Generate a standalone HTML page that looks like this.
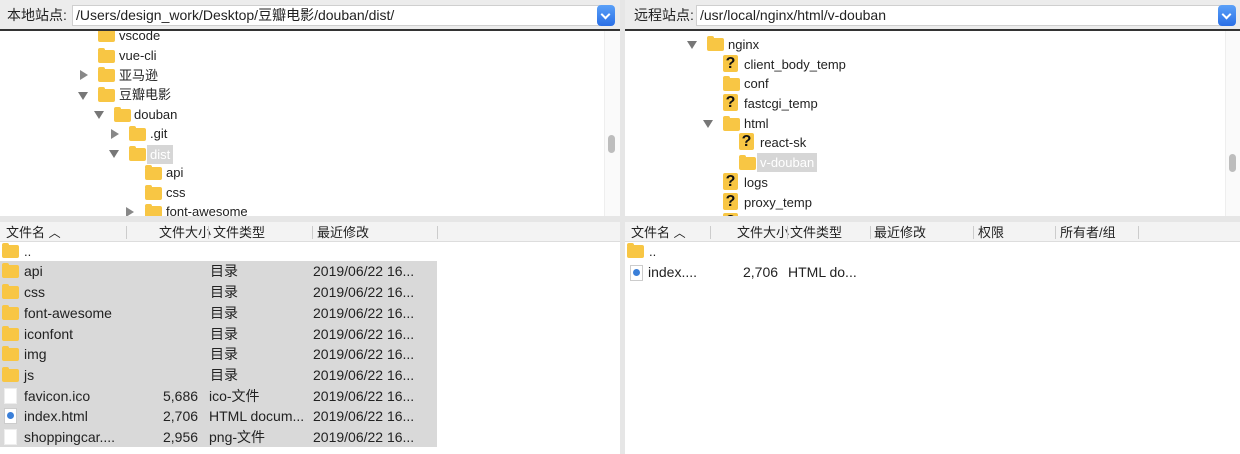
<!DOCTYPE html>
<html><head><meta charset="utf-8"><style>
*{box-sizing:border-box;margin:0;padding:0}
body{width:1240px;height:454px;background:#e6e6e6;font-family:"Liberation Sans","Noto Sans CJK SC",sans-serif;font-size:13px;color:#222;position:relative;overflow:hidden}
.abs{position:absolute;white-space:nowrap;line-height:17px}
.bar{position:absolute;top:0;height:31px;background:#ececec;border-bottom:2px solid #333}
.inp{position:absolute;top:5px;height:21px;background:#fff;border:1px solid #cfcfcf;font-size:14px;line-height:19px;padding-left:3px}
.dd{position:absolute;top:5px;width:18px;height:21px;background:linear-gradient(#5aa0f8,#2a6fe6);border-radius:4px}
.dd:after{content:"";position:absolute;left:5px;top:6px;width:5px;height:5px;border-right:2px solid #fff;border-bottom:2px solid #fff;transform:rotate(45deg)}
.tree{position:absolute;top:31px;height:185px;background:#fff;overflow:hidden}
.list{position:absolute;top:222px;height:232px;background:#fff;overflow:hidden}
.hdr{position:absolute;top:0;left:0;right:0;height:20px;background:#f3f3f3;border-bottom:1px solid #ddd}
.fd{position:absolute;width:17px;height:13px;background:#f8c644;border-radius:2px}
.fd:before{content:"";position:absolute;left:0;top:-2px;width:7px;height:3px;background:#f8c644;border-radius:2px 2px 0 0}
.q{position:absolute;width:15px;height:17px;background:#f8c644;border-radius:2px;font-weight:bold;font-size:16px;line-height:17px;text-align:center;color:#111}
.tri{position:absolute;width:0;height:0}
.dn{border-left:5px solid transparent;border-right:5px solid transparent;border-top:8px solid #777}
.rt{border-top:5px solid transparent;border-bottom:5px solid transparent;border-left:8px solid #888}
.sep{position:absolute;top:4px;width:1px;height:13px;background:#ccc}
.file{position:absolute;width:13px;height:16px;background:#fff;border:1px solid #ccc}
.html:after{content:"";position:absolute;left:2px;top:3px;width:7px;height:7px;border-radius:50%;background:#3a7fd8}
.scr{position:absolute;width:7px;height:18px;background:#bdbdbd;border-radius:4px}
.r{position:absolute;left:0;font-size:14px}
</style></head><body>
<!-- LEFT -->
<div class="bar" style="left:0;width:620px"></div>
<div class="abs" style="left:7px;top:7px;font-size:14px">本地站点:</div>
<div class="inp" style="left:72px;width:528px">/Users/design_work/Desktop/豆瓣电影/douban/dist/</div>
<div class="dd" style="left:597px"></div>
<div class="tree" style="left:0;width:620px">
 <div class="abs" style="left:604px;top:0;width:16px;height:185px;background:#fafafa;border-left:1px solid #eee"></div>
 <div class="scr" style="left:608px;top:104px"></div>
 <div class="fd" style="left:98px;top:-2px"></div><div class="abs" style="left:119px;top:-4px">vscode</div>
 <div class="fd" style="left:98px;top:19px"></div><div class="abs" style="left:119px;top:16px">vue-cli</div>
 <div class="tri rt" style="left:80px;top:39px"></div><div class="fd" style="left:98px;top:38px"></div><div class="abs" style="left:119px;top:36px">亚马逊</div>
 <div class="tri dn" style="left:78px;top:61px"></div><div class="fd" style="left:98px;top:58px"></div><div class="abs" style="left:119px;top:55px">豆瓣电影</div>
 <div class="tri dn" style="left:94px;top:80px"></div><div class="fd" style="left:114px;top:78px"></div><div class="abs" style="left:134px;top:75px">douban</div>
 <div class="tri rt" style="left:111px;top:98px"></div><div class="fd" style="left:129px;top:97px"></div><div class="abs" style="left:150px;top:94px">.git</div>
 <div class="tri dn" style="left:109px;top:119px"></div><div class="fd" style="left:129px;top:117px"></div><div class="abs" style="left:147px;top:114px;background:#d6d6d6;color:#fff;padding:0 3px;height:19px;line-height:19px">dist</div>
 <div class="fd" style="left:145px;top:136px"></div><div class="abs" style="left:166px;top:133px">api</div>
 <div class="fd" style="left:145px;top:156px"></div><div class="abs" style="left:166px;top:153px">css</div>
 <div class="tri rt" style="left:126px;top:176px"></div><div class="fd" style="left:145px;top:175px"></div><div class="abs" style="left:166px;top:172px">font-awesome</div>
</div>
<div class="list" style="left:0;width:620px">
 <div class="hdr"></div>
 <div class="abs" style="left:6px;top:2px">文件名 <span style="font-size:12px">︿</span></div>
 <div class="sep" style="left:126px"></div>
 <div class="abs" style="left:159px;top:2px">文件大小</div>
 <div class="sep" style="left:208px"></div>
 <div class="abs" style="left:213px;top:2px">文件类型</div>
 <div class="sep" style="left:312px"></div>
 <div class="abs" style="left:317px;top:2px">最近修改</div>
 <div class="sep" style="left:437px"></div>
 <div class="abs" style="left:0;top:39px;width:437px;height:186px;background:#d9d9d9"></div>
 <div class="fd" style="left:2px;top:23px"></div><div class="abs" style="left:24px;top:21px">..</div>
 <div class="r" style="top:40px"><div class="fd" style="left:2px;top:3px"></div><div class="abs" style="left:24px;top:1px">api</div><div class="abs" style="left:210px;top:1px">目录</div><div class="abs" style="left:313px;top:1px">2019/06/22 16...</div></div>
 <div class="r" style="top:61px"><div class="fd" style="left:2px;top:3px"></div><div class="abs" style="left:24px;top:1px">css</div><div class="abs" style="left:210px;top:1px">目录</div><div class="abs" style="left:313px;top:1px">2019/06/22 16...</div></div>
 <div class="r" style="top:82px"><div class="fd" style="left:2px;top:3px"></div><div class="abs" style="left:24px;top:1px">font-awesome</div><div class="abs" style="left:210px;top:1px">目录</div><div class="abs" style="left:313px;top:1px">2019/06/22 16...</div></div>
 <div class="r" style="top:103px"><div class="fd" style="left:2px;top:3px"></div><div class="abs" style="left:24px;top:1px">iconfont</div><div class="abs" style="left:210px;top:1px">目录</div><div class="abs" style="left:313px;top:1px">2019/06/22 16...</div></div>
 <div class="r" style="top:123px"><div class="fd" style="left:2px;top:3px"></div><div class="abs" style="left:24px;top:1px">img</div><div class="abs" style="left:210px;top:1px">目录</div><div class="abs" style="left:313px;top:1px">2019/06/22 16...</div></div>
 <div class="r" style="top:144px"><div class="fd" style="left:2px;top:3px"></div><div class="abs" style="left:24px;top:1px">js</div><div class="abs" style="left:210px;top:1px">目录</div><div class="abs" style="left:313px;top:1px">2019/06/22 16...</div></div>
 <div class="r" style="top:165px"><div class="file" style="left:4px;top:1px;border-color:#eee"></div><div class="abs" style="left:24px;top:1px">favicon.ico</div><div class="abs" style="left:163px;top:1px">5,686</div><div class="abs" style="left:209px;top:1px">ico-文件</div><div class="abs" style="left:313px;top:1px">2019/06/22 16...</div></div>
 <div class="r" style="top:185px"><div class="file html" style="left:4px;top:1px"></div><div class="abs" style="left:24px;top:1px">index.html</div><div class="abs" style="left:163px;top:1px">2,706</div><div class="abs" style="left:209px;top:1px">HTML docum...</div><div class="abs" style="left:313px;top:1px">2019/06/22 16...</div></div>
 <div class="r" style="top:206px"><div class="file" style="left:4px;top:1px;border-color:#eee"></div><div class="abs" style="left:24px;top:1px">shoppingcar....</div><div class="abs" style="left:163px;top:1px">2,956</div><div class="abs" style="left:209px;top:1px">png-文件</div><div class="abs" style="left:313px;top:1px">2019/06/22 16...</div></div>
</div>
<!-- RIGHT -->
<div class="bar" style="left:625px;width:615px"></div>
<div class="abs" style="left:634px;top:7px;font-size:14px">远程站点:</div>
<div class="inp" style="left:696px;width:528px">/usr/local/nginx/html/v-douban</div>
<div class="dd" style="left:1218px"></div>
<div class="tree" style="left:625px;width:615px">
 <div class="abs" style="left:600px;top:0;width:15px;height:185px;background:#fafafa;border-left:1px solid #eee"></div>
 <div class="scr" style="left:604px;top:123px"></div>
 <div class="tri dn" style="left:62px;top:10px"></div><div class="fd" style="left:82px;top:7px"></div><div class="abs" style="left:103px;top:5px">nginx</div>
 <div class="q" style="left:98px;top:24px">?</div><div class="abs" style="left:119px;top:25px">client_body_temp</div>
 <div class="fd" style="left:98px;top:47px"></div><div class="abs" style="left:119px;top:44px">conf</div>
 <div class="q" style="left:98px;top:63px">?</div><div class="abs" style="left:119px;top:64px">fastcgi_temp</div>
 <div class="tri dn" style="left:78px;top:89px"></div><div class="fd" style="left:98px;top:87px"></div><div class="abs" style="left:119px;top:84px">html</div>
 <div class="q" style="left:114px;top:102px">?</div><div class="abs" style="left:135px;top:103px">react-sk</div>
 <div class="fd" style="left:114px;top:126px"></div><div class="abs" style="left:132px;top:122px;background:#d6d6d6;color:#fff;padding:0 3px;height:19px;line-height:19px">v-douban</div>
 <div class="q" style="left:98px;top:142px">?</div><div class="abs" style="left:119px;top:143px">logs</div>
 <div class="q" style="left:98px;top:162px">?</div><div class="abs" style="left:119px;top:163px">proxy_temp</div>
 <div class="q" style="left:98px;top:182px">?</div>
</div>
<div class="list" style="left:625px;width:615px">
 <div class="hdr"></div>
 <div class="abs" style="left:6px;top:2px">文件名 <span style="font-size:12px">︿</span></div>
 <div class="sep" style="left:85px"></div>
 <div class="abs" style="left:112px;top:2px">文件大小</div>
 <div class="sep" style="left:162px"></div>
 <div class="abs" style="left:165px;top:2px">文件类型</div>
 <div class="sep" style="left:245px"></div>
 <div class="abs" style="left:249px;top:2px">最近修改</div>
 <div class="sep" style="left:348px"></div>
 <div class="abs" style="left:353px;top:2px">权限</div>
 <div class="sep" style="left:430px"></div>
 <div class="abs" style="left:435px;top:2px">所有者/组</div>
 <div class="sep" style="left:513px"></div>
 <div class="fd" style="left:2px;top:23px"></div><div class="abs" style="left:24px;top:21px">..</div>
 <div class="file html" style="left:5px;top:43px"></div>
 <div class="abs" style="left:23px;top:42px;font-size:14px">index....</div>
 <div class="abs" style="left:118px;top:42px;font-size:14px">2,706</div>
 <div class="abs" style="left:163px;top:42px;font-size:14px">HTML do...</div>
</div>
</body></html>
